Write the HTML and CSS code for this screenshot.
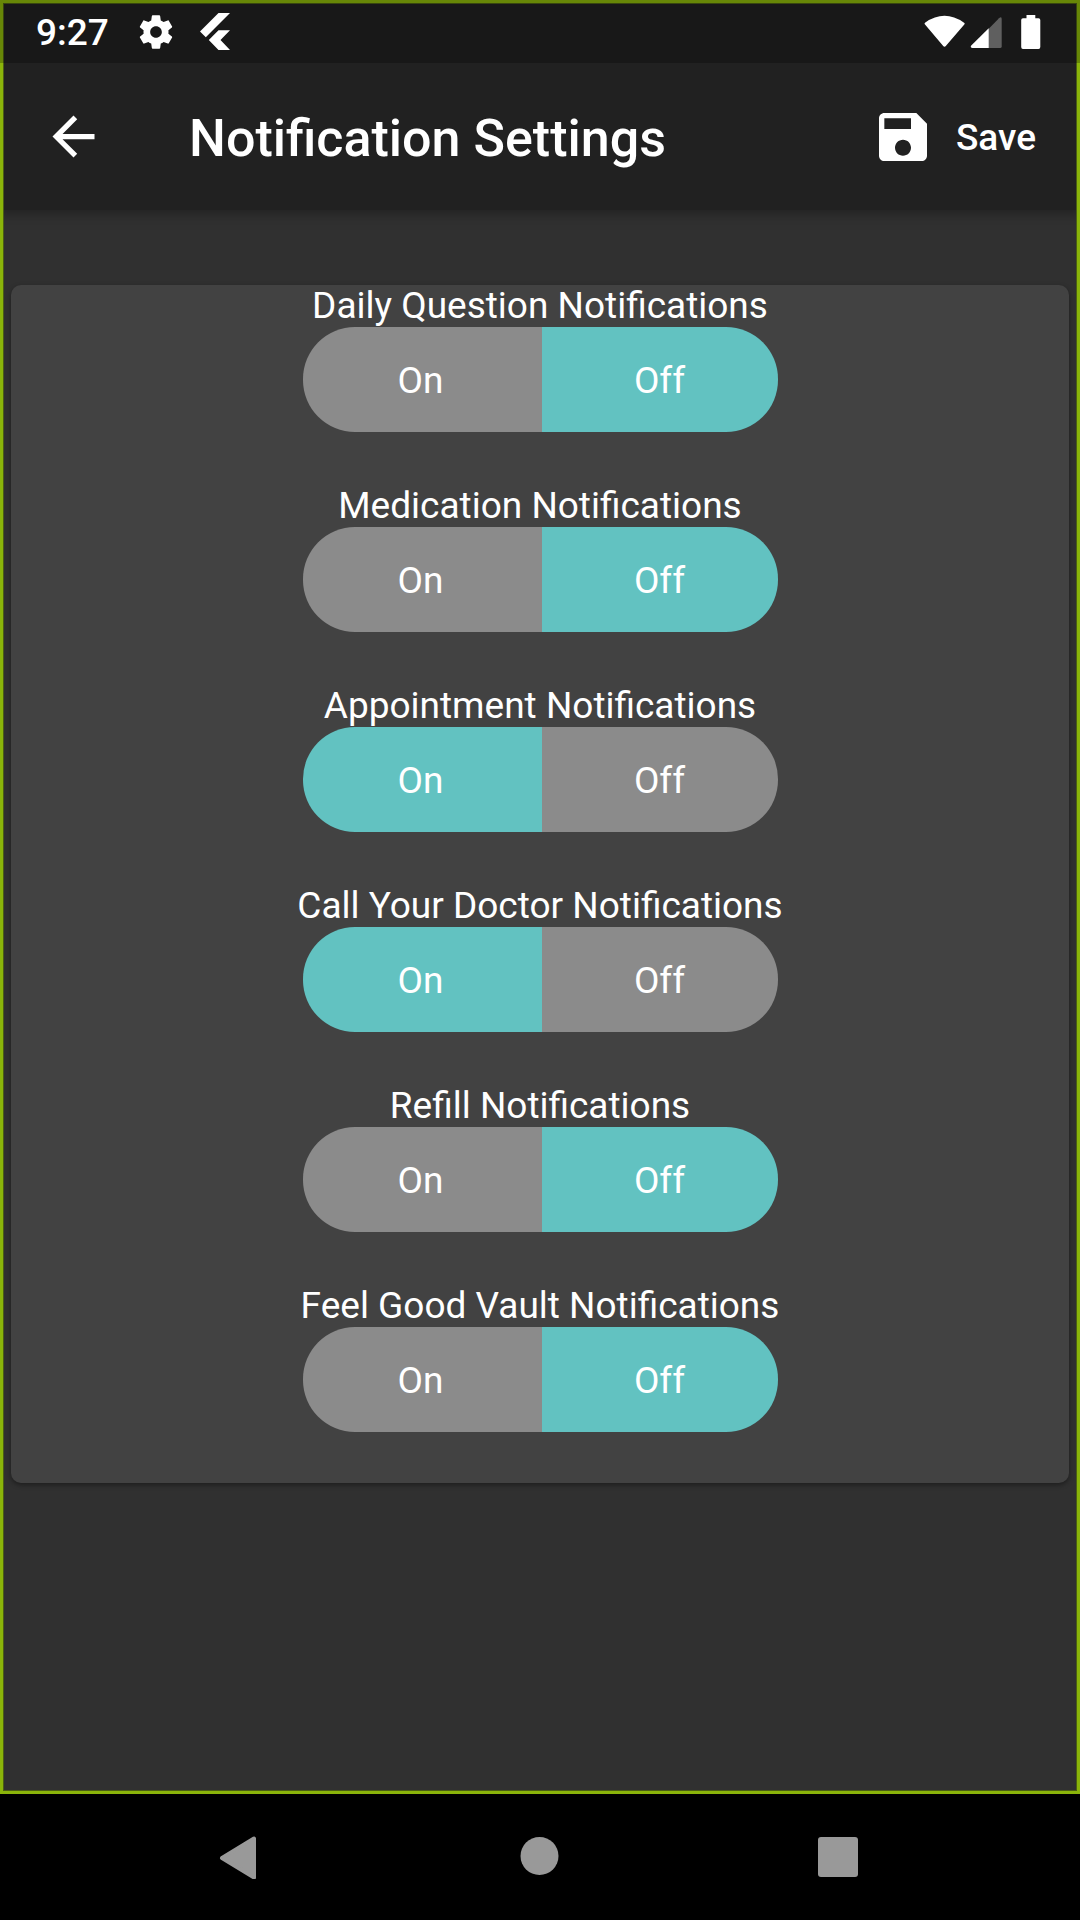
FILE: index.html
```html
<!DOCTYPE html>
<html lang="en">
<head>
<meta charset="utf-8">
<meta name="viewport" content="width=device-width, initial-scale=1">
<title>Notification Settings</title>
<link rel="stylesheet" href="styles.css">
</head>
<body>
<div class="screen">
  <div class="app">
    <div class="status">
      <span class="clock">9:27</span>
      <svg class="icon-gear" viewBox="0 0 24 24" width="40" height="40" fill="#fff" aria-hidden="true"><path d="M19.430 12.980c.04-.32.07-.64.07-.98s-.03-.66-.07-.98l2.110-1.650c.19-.15.24-.42.12-.64l-2-3.460c-.12-.22-.39-.3-.61-.22l-2.490 1c-.52-.4-1.080-.73-1.690-.98l-.38-2.650C14.460 2.180 14.250 2 14 2h-4c-.25 0-.46.18-.49.42l-.38 2.650c-.61.25-1.170.59-1.690.98l-2.490-1c-.23-.09-.49 0-.61.22l-2 3.460c-.13.22-.07.49.12.64l2.110 1.650c-.04.32-.07.65-.07.98s.03.66.07.98l-2.110 1.650c-.19.15-.24.42-.12.64l2 3.460c.12.22.39.3.61.22l2.490-1c.52.4 1.080.73 1.690.98l.38 2.650c.03.24.24.42.49.42h4c.25 0 .46-.18.49-.42l.38-2.650c.61-.25 1.170-.59 1.690-.98l2.490 1c.23.09.49 0 .61-.22l2-3.460c.12-.22.07-.49-.12-.64l-2.110-1.650zM12 15.500c-1.930 0-3.500-1.570-3.500-3.500s1.570-3.500 3.500-3.500 3.500 1.570 3.500 3.500-1.570 3.500-3.500 3.500z"/></svg>
      <svg class="icon-flutter" viewBox="0 0 30 37" width="30" height="37" fill="#fff" aria-hidden="true"><path d="M18.500 0H30L5.800 24.200 0 18.500ZM18.500 17.200H30L20.500 27 30 37H18.500L8.800 27Z"/></svg>
      <span class="status-right">
        <svg viewBox="0 0 42 34" width="42" height="34" fill="#fff" aria-hidden="true"><path d="M1 9.500Q0 8.300 1.300 7.400Q20.500-6 39.700 7.400Q41.300 8.300 40.300 9.500L22 30.800Q20.500 32.600 19 30.800Z"/></svg>
        <svg viewBox="0 0 42 34" width="42" height="34" aria-hidden="true"><path fill="#5f5f5f" d="M18 14.500 29 3.200Q31.700 1 31.700 4V31.500Q31.700 33 30 33H18Z"/><path fill="#fff" d="M18.700 13.300V33H2.500Q0 32.500 1 30.800Z"/></svg>
        <svg viewBox="0 0 20 34" width="20" height="34" fill="#fff" aria-hidden="true"><path d="M5.500 0H14.300V3.300H17.500Q19.300 3.300 19.300 5V32Q19.300 34 17.500 34H2Q.2 34 .2 32V5Q.2 3.300 2 3.300H5.500Z"/></svg>
      </span>
    </div>
    <header class="appbar">
      <button class="back" type="button" aria-label="Back"><svg viewBox="0 0 24 24" width="63" height="63" fill="#fff"><path d="M20 11H7.830l5.590-5.590L12 4l-8 8 8 8 1.410-1.410L7.830 13H20v-2z"/></svg></button>
      <h1 class="title">Notification Settings</h1>
      <button class="save" type="button"><svg viewBox="0 0 24 24" width="64" height="64" fill="#fff" aria-hidden="true"><path d="M17 3H5c-1.110 0-2 .9-2 2v14c0 1.100.89 2 2 2h14c1.100 0 2-.9 2-2V7l-4-4zm-5 16c-1.660 0-3-1.340-3-3s1.340-3 3-3 3 1.340 3 3-1.340 3-3 3zm3-10H5V5h10v4z"/></svg><span>Save</span></button>
    </header>
    <main class="content">
      <form class="card">
        <fieldset class="setting"><legend>Daily Question Notifications</legend><div class="toggle"><label><input type="radio" name="daily" value="on"><span>On</span></label><label><input type="radio" name="daily" value="off" checked><span>Off</span></label></div></fieldset>
        <fieldset class="setting"><legend>Medication Notifications</legend><div class="toggle"><label><input type="radio" name="medication" value="on"><span>On</span></label><label><input type="radio" name="medication" value="off" checked><span>Off</span></label></div></fieldset>
        <fieldset class="setting"><legend>Appointment Notifications</legend><div class="toggle"><label><input type="radio" name="appointment" value="on" checked><span>On</span></label><label><input type="radio" name="appointment" value="off"><span>Off</span></label></div></fieldset>
        <fieldset class="setting"><legend>Call Your Doctor Notifications</legend><div class="toggle"><label><input type="radio" name="doctor" value="on" checked><span>On</span></label><label><input type="radio" name="doctor" value="off"><span>Off</span></label></div></fieldset>
        <fieldset class="setting"><legend>Refill Notifications</legend><div class="toggle"><label><input type="radio" name="refill" value="on"><span>On</span></label><label><input type="radio" name="refill" value="off" checked><span>Off</span></label></div></fieldset>
        <fieldset class="setting"><legend>Feel Good Vault Notifications</legend><div class="toggle"><label><input type="radio" name="vault" value="on"><span>On</span></label><label><input type="radio" name="vault" value="off" checked><span>Off</span></label></div></fieldset>
      </form>
    </main>
  </div>
  <nav class="navbar" aria-label="System">
    <button type="button" aria-label="Back"><svg viewBox="0 0 44 44" width="44" height="44"><path d="M4 23 36 3.500V42.500Z" fill="#999" stroke="#999" stroke-width="4" stroke-linejoin="round"/></svg></button>
    <button type="button" aria-label="Home"><svg viewBox="0 0 44 44" width="44" height="44"><circle cx="21.500" cy="21" r="19" fill="#999"/></svg></button>
    <button type="button" aria-label="Overview"><svg viewBox="0 0 44 44" width="44" height="44"><rect x="0" y="2" width="40" height="40" rx="3" fill="#999"/></svg></button>
  </nav>
</div>
</body>
</html>
```
FILE: styles.css
```css
* { box-sizing: border-box; }

body {
  margin: 0;
  background: #000;
  color: #fff;
  font-family: Roboto, "Liberation Sans", sans-serif;
  font-size: 37px;
}

button {
  padding: 0;
  border: 0;
  background: none;
  color: inherit;
  font: inherit;
  cursor: pointer;
}

svg { display: block; flex: none; }

.screen {
  display: flex;
  flex-direction: column;
  min-height: 100vh;
}

.app {
  position: relative;
  display: flex;
  flex: 1;
  flex-direction: column;
  background: #303030;
}

/* green frame around the app window, under the status bar scrim */
.app::after {
  content: "";
  position: absolute;
  inset: 0;
  border: 3px solid #8ab40a;
  box-shadow: inset 0 0 0 1px #4b5e14;
  pointer-events: none;
}

.status {
  position: relative;
  z-index: 1;
  display: flex;
  align-items: center;
  height: 63px;
  padding: 0 39px 0 36px;
}

.status::before {
  content: "";
  position: absolute;
  inset: 0;
  z-index: -1;
  background: rgba(0, 0, 0, 0.25);
}

.clock {
  padding-top: 2px;
  font-size: 37px;
  font-weight: 500;
}

.icon-gear { margin-left: 27px; }
.icon-flutter { margin-left: 24px; }

.status-right {
  display: flex;
  gap: 4px;
  margin-left: auto;
}

.status-right svg:last-child { margin-left: 5px; }

.appbar {
  display: flex;
  align-items: center;
  height: 210px;
  margin-top: -63px;
  padding: 63px 44px 0 42px;
  background: #212121;
  box-shadow: 0 4px 10px rgba(0, 0, 0, 0.3);
}

.title {
  flex: 1;
  margin: 0 0 0 84px;
  padding-top: 3px;
  font-size: 52px;
  font-weight: 500;
}

.save {
  display: flex;
  align-items: center;
  gap: 21px;
  font-size: 37px;
  font-weight: 500;
}

.save span { padding-top: 2px; }

.content { padding: 75px 11px 0; }

.card {
  display: flex;
  flex-direction: column;
  gap: 53px;
  padding-bottom: 51px;
  border-radius: 10px;
  background: #424242;
  box-shadow: 0 2px 5px rgba(0, 0, 0, 0.4);
}

.setting {
  display: flex;
  flex-direction: column;
  align-items: center;
  min-width: 0;
  margin: 0;
  padding: 0;
  border: 0;
}

.setting legend {
  margin: 0 auto;
  padding: 0;
  line-height: 42px;
  white-space: nowrap;
}

.toggle {
  display: flex;
  overflow: hidden;
  border-radius: 52px;
}

.toggle label {
  position: relative;
  cursor: pointer;
}

.toggle input {
  position: absolute;
  inset: 0;
  margin: 0;
  opacity: 0;
}

.toggle span {
  display: flex;
  align-items: center;
  justify-content: center;
  width: 236px;
  height: 105px;
  padding-top: 2px;
  background: #8b8b8b;
}

.toggle label:first-child span {
  width: 239px;
  padding-right: 3px;
}

.toggle input:checked + span { background: #62c2c1; }

.navbar {
  display: flex;
  justify-content: center;
  height: 126px;
}

.navbar button {
  display: flex;
  align-items: center;
  justify-content: center;
  width: 300px;
}
```
